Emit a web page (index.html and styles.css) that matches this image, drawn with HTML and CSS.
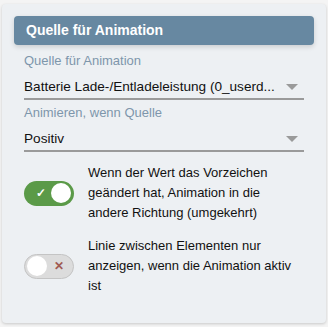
FILE: index.html
```html
<!DOCTYPE html>
<html lang="de">
<head>
    <meta charset="UTF-8">
    <meta name="viewport" content="width=device-width, initial-scale=1.0">
    <title>Quelle für Animation</title>
    <link rel="stylesheet" href="styles.css">
</head>
<body>
    <div class="card">
        <!-- Header -->
        <div class="card-header">Quelle für Animation</div>

        <!-- Select fields -->
        <div class="field">
            <label class="field-label">Quelle für Animation</label>
            <div class="select">
                <span class="select-value">Batterie Lade-/Entladeleistung (0_userd...</span>
                <span class="select-arrow"></span>
            </div>
        </div>
        <div class="field">
            <label class="field-label">Animieren, wenn Quelle</label>
            <div class="select">
                <span class="select-value">Positiv</span>
                <span class="select-arrow"></span>
            </div>
        </div>

        <!-- Switches -->
        <div class="switch-row">
            <div class="switch on">
                <span class="switch-icon">&#10003;</span>
                <span class="knob"></span>
            </div>
            <p>Wenn der Wert das Vorzeichen geändert hat, Animation in die andere Richtung (umgekehrt)</p>
        </div>
        <div class="switch-row">
            <div class="switch off">
                <span class="knob"></span>
                <span class="switch-icon">&#10005;</span>
            </div>
            <p>Linie zwischen Elementen nur anzeigen, wenn die Animation aktiv ist</p>
        </div>
    </div>
</body>
</html>
```

FILE: styles.css
```css
/* General */
body, html {
    margin: 0;
    padding: 0;
    font-family: "Liberation Sans", Arial, sans-serif;
    background-color: #f4f4f4;
}
body {
    padding: 4px 2px 4px 2px;
}

/* Card */
.card {
    background: #edf0f3;
    border-radius: 4px;
    box-shadow: 0 1px 3px rgba(0, 0, 0, 0.18);
    padding: 12px 12px 27px 12px;
}
.card-header {
    background: #6788a1;
    color: white;
    font-weight: bold;
    font-size: 14px;
    line-height: 29px;
    padding: 0 12px;
    border-radius: 4px;
    box-shadow: 0 2px 5px rgba(0, 0, 0, 0.15);
}

/* Select fields */
.field {
    margin: 8px 10px 0 10px;
}
.field + .field {
    margin-top: 5px;
}
.field-label {
    display: block;
    font-size: 13px;
    line-height: 16px;
    color: #7e96ab;
}
.select {
    display: flex;
    align-items: center;
    padding: 8px 0 1px;
    border-bottom: 2px solid #9a9a9a;
}
.select-value {
    flex: 1;
    min-width: 0;
    font-size: 13.6px;
    line-height: 20px;
    color: #111;
    white-space: nowrap;
    overflow: hidden;
    text-overflow: ellipsis;
}
.select-arrow {
    width: 0;
    height: 0;
    margin: 0 6px 0 8px;
    border-left: 6px solid transparent;
    border-right: 6px solid transparent;
    border-top: 6px solid #9a9a9a;
}

/* Switches */
.switch-row {
    display: flex;
    align-items: center;
    gap: 14px;
    margin: 11px 10px 0 10px;
}
.switch-row + .switch-row {
    margin-top: 13px;
}
.switch-row p {
    margin: 0;
    flex: 1;
    font-size: 13px;
    line-height: 20px;
    color: #111;
}
.switch {
    flex: none;
    width: 50px;
    height: 25px;
    box-sizing: border-box;
    border-radius: 13px;
    display: flex;
    align-items: center;
    justify-content: space-between;
    padding: 0 3px 0 12px;
}
.switch.on {
    background: #5b9a48;
}
.switch.off {
    background: #dcdcdc;
    border: 1px solid #c4c4c4;
    padding: 0 9px 0 2px;
}
.knob {
    width: 20px;
    height: 20px;
    border-radius: 50%;
    background: white;
}
.switch-icon {
    font-size: 12px;
    font-weight: bold;
    line-height: 1;
}
.switch.on .switch-icon {
    color: white;
}
.switch.off .switch-icon {
    color: #a05a52;
    font-size: 12px;
}
```
